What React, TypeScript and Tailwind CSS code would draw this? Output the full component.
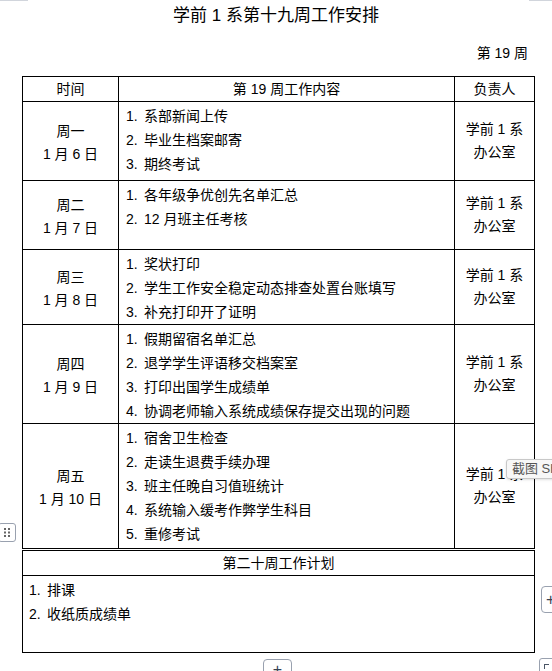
import React from 'react';

type Day = {
  day: string;
  date: string;
  items: string[];
  rowClass: string;
};

const DAYS: Day[] = [
  {
    day: '周一',
    date: '1 月 6 日',
    items: ['系部新闻上传', '毕业生档案邮寄', '期终考试'],
    rowClass: 'h-[79px] border-b',
  },
  {
    day: '周二',
    date: '1 月 7 日',
    items: ['各年级争优创先名单汇总', '12 月班主任考核'],
    rowClass: 'h-[69px] border-b',
  },
  {
    day: '周三',
    date: '1 月 8 日',
    items: ['奖状打印', '学生工作安全稳定动态排查处置台账填写', '补充打印开了证明'],
    rowClass: 'h-[75px] border-b',
  },
  {
    day: '周四',
    date: '1 月 9 日',
    items: ['假期留宿名单汇总', '退学学生评语移交档案室', '打印出国学生成绩单', '协调老师输入系统成绩保存提交出现的问题'],
    rowClass: 'h-[99px] border-b',
  },
  {
    day: '周五',
    date: '1 月 10 日',
    items: ['宿舍卫生检查', '走读生退费手续办理', '班主任晚自习值班统计', '系统输入缓考作弊学生科目', '重修考试'],
    rowClass: 'h-[124px]',
  },
];

const NEXT_WEEK = ['排课', '收纸质成绩单'];

function NumItem({ n, text }: { n: number; text: string }) {
  return (
    <div className="flex whitespace-nowrap">
      <span className="w-[18px] shrink-0">{n}.</span>
      <span>{text}</span>
    </div>
  );
}

function DayRow({ d }: { d: Day }) {
  return (
    <div className={`flex border-black ${d.rowClass}`}>
      <div className="w-[96px] shrink-0 border-r border-black flex flex-col items-center justify-center leading-[23px] pt-[3px]">
        <span>{d.day}</span>
        <span>{d.date}</span>
      </div>
      <div className="w-[336px] shrink-0 border-r border-black pl-[7px] pt-[2px] leading-[24px]">
        {d.items.map((it, i) => (
          <NumItem key={i} n={i + 1} text={it} />
        ))}
      </div>
      <div className="flex-1 flex flex-col items-center justify-center leading-[23px]">
        <span>学前 1 系</span>
        <span>办公室</span>
      </div>
    </div>
  );
}

export default function App() {
  return (
    <div className="relative w-[552px] h-[671px] overflow-hidden bg-white text-black text-[14px] font-['Liberation_Sans','Noto_Sans_CJK_SC',sans-serif]">
      {/* page corner marks */}
      <div className="absolute left-0 top-0 w-[28px] h-px bg-gray-300" />
      <div className="absolute right-0 top-0 w-[23px] h-px bg-gray-300" />

      <h1 className="pt-[4px] text-center text-[17px] leading-[24px] font-normal">学前 1 系第十九周工作安排</h1>
      <div className="mt-[15px] pr-[24px] text-right leading-[20px]">第 19 周</div>

      {/* weekly table */}
      <div className="mt-[13px] ml-[22px] w-[513px] border border-black">
        <div className="flex h-[25px] border-b border-black">
          <div className="w-[96px] shrink-0 border-r border-black flex items-center justify-center">时间</div>
          <div className="w-[336px] shrink-0 border-r border-black flex items-center justify-center">第 19 周工作内容</div>
          <div className="flex-1 flex items-center justify-center">负责人</div>
        </div>
        {DAYS.map((d) => (
          <DayRow key={d.day} d={d} />
        ))}
      </div>

      {/* next week plan */}
      <div className="mt-px ml-[22px] w-[513px] border border-black">
        <div className="h-[25px] border-b border-black flex items-center justify-center">第二十周工作计划</div>
        <div className="h-[76px] pl-[6px] pt-[2px] leading-[24px]">
          {NEXT_WEEK.map((it, i) => (
            <NumItem key={i} n={i + 1} text={it} />
          ))}
        </div>
      </div>

      {/* editor overlays */}
      <div className="absolute left-[-2px] top-[523px] w-[18px] h-[19px] bg-white border border-gray-400 rounded-[3px] flex items-center justify-center">
        <svg width="6" height="9" viewBox="0 0 6 9" fill="#666">
          <rect x="0" y="0" width="2" height="2" />
          <rect x="4" y="0" width="2" height="2" />
          <rect x="0" y="3.5" width="2" height="2" />
          <rect x="4" y="3.5" width="2" height="2" />
          <rect x="0" y="7" width="2" height="2" />
          <rect x="4" y="7" width="2" height="2" />
        </svg>
      </div>

      <div className="absolute left-[541px] top-[586px] w-[26px] h-[27px] bg-white border border-gray-400 rounded-[4px] flex items-center pl-[4px]">
        <span className="text-[16px] leading-none text-gray-700">+</span>
      </div>

      <div className="absolute left-[263px] top-[659px] w-[29px] h-[26px] bg-white border border-gray-400 rounded-[4px] flex justify-center pt-[2px]">
        <span className="text-[16px] leading-none text-gray-700">+</span>
      </div>

      <div className="absolute left-[539px] top-[658px] w-[24px] h-[24px] bg-white border border-gray-400 rounded-[3px]">
        <div className="absolute left-[4px] top-[5px] w-[5px] h-[5px] border-l border-t border-gray-600" />
      </div>

      <div className="absolute left-[506px] top-[459px] h-[20px] pl-[5px] pr-[10px] bg-[#f7f7f7] border border-[#c8c8c8] rounded-[3px] text-[13px] leading-[18px] text-[#555] whitespace-nowrap shadow-sm">
        截图 Sh
      </div>
    </div>
  );
}
